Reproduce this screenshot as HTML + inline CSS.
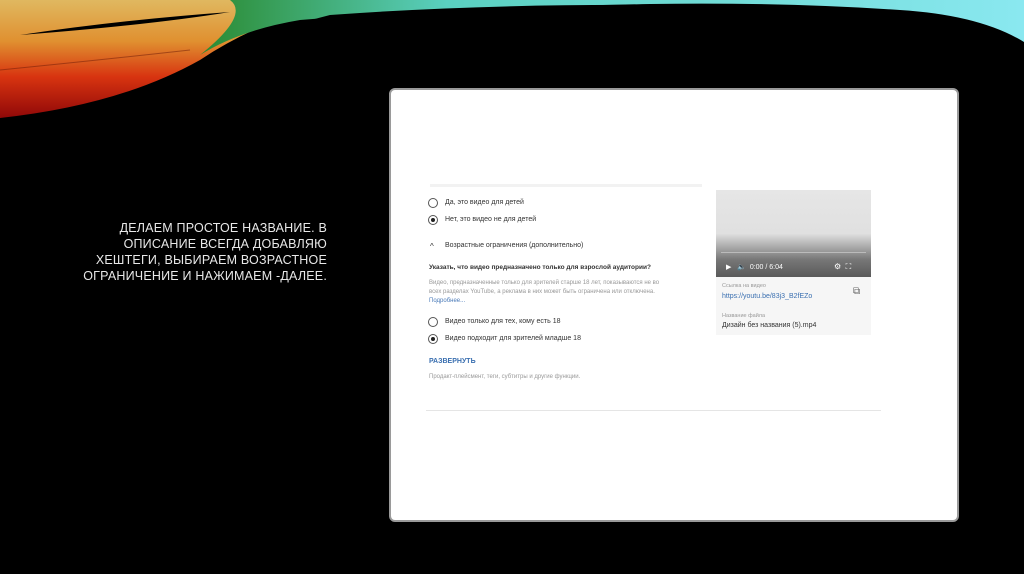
<!DOCTYPE html>
<html><head><meta charset="utf-8"><style>
body{margin:0;width:1024px;height:574px;background:#000;overflow:hidden;position:relative;font-family:"Liberation Sans","DejaVu Sans",sans-serif}
.t{position:absolute;right:697px;top:220px;text-align:right;color:#e8e8e8;font-size:12.5px;line-height:16px;letter-spacing:0.2px}
.card{position:absolute;left:389px;top:88px;width:570px;height:434px;background:#fff;border:2px solid #9a9a9a;border-radius:6px;box-sizing:border-box}
.a{position:absolute;font-size:7px;color:#333;white-space:nowrap}
.r{position:absolute;width:8px;height:8px;border:1px solid #555;border-radius:50%}
.r.on::after{content:"";position:absolute;left:2px;top:2px;width:4px;height:4px;border-radius:50%;background:#222}
</style></head><body>
<svg width="1024" height="130" style="position:absolute;left:0;top:0">
<defs>
<linearGradient id="g1" x1="0" y1="0" x2="0" y2="1"><stop offset="0" stop-color="#e0b860"/><stop offset="0.35" stop-color="#e09030"/><stop offset="0.65" stop-color="#d83410"/><stop offset="1" stop-color="#900808"/></linearGradient>
<linearGradient id="g2" x1="0" y1="0" x2="1" y2="0"><stop offset="0" stop-color="#2a8a30"/><stop offset="0.3" stop-color="#5ad0c0"/><stop offset="1" stop-color="#8ae8f0"/></linearGradient>
</defs>
<path d="M0 0 L340 0 Q260 20 200 60 Q120 105 0 118 Z" fill="url(#g1)"/>
<path d="M20 35 Q120 20 230 12 Q150 25 20 35Z" fill="#000"/>
<path d="M0 70 Q100 60 190 50" stroke="#6a1a08" stroke-width="1" fill="none" opacity="0.5"/>
<path d="M230 0 L1024 0 L1024 42 Q980 15 900 10 Q780 2 650 4 Q450 8 300 20 Q240 30 200 55 Q250 15 230 0Z" fill="url(#g2)"/>
<path d="M330 15 Q480 4 650 5 Q800 4 900 12 Q990 25 1024 48 L1024 130 L0 130 L0 122 Q140 108 230 55 Q270 30 330 15Z" fill="#000"/>
</svg>
<div class="t">ДЕЛАЕМ ПРОСТОЕ НАЗВАНИЕ. В<br>ОПИСАНИЕ ВСЕГДА ДОБАВЛЯЮ<br>ХЕШТЕГИ, ВЫБИРАЕМ ВОЗРАСТНОЕ<br>ОГРАНИЧЕНИЕ И НАЖИМАЕМ -ДАЛЕЕ.</div>
<div class="card"></div>
<div style="position:absolute;left:430px;top:184px;width:272px;height:3px;background:#f2f2f2"></div>
<div class="r" style="left:428px;top:198px"></div><div class="a" style="left:445px;top:199px">Да, это видео для детей</div>
<div class="r on" style="left:428px;top:215px"></div><div class="a" style="left:445px;top:216px">Нет, это видео не для детей</div>
<div class="a" style="left:430px;top:242px;font-size:8px">^</div><div class="a" style="left:445px;top:242px">Возрастные ограничения (дополнительно)</div>
<div class="a" style="left:429px;top:264px;font-size:6.5px;font-weight:bold">Указать, что видео предназначено только для взрослой аудитории?</div>
<div class="a" style="left:429px;top:279px;font-size:6px;color:#999;line-height:9px">Видео, предназначенные только для зрителей старше 18 лет, показываются не во<br>всех разделах YouTube, а реклама в них может быть ограничена или отключена.<br><span style="color:#4a7ab8">Подробнее...</span></div>
<div class="r" style="left:428px;top:317px"></div><div class="a" style="left:445px;top:318px">Видео только для тех, кому есть 18</div>
<div class="r on" style="left:428px;top:334px"></div><div class="a" style="left:445px;top:335px">Видео подходит для зрителей младше 18</div>
<div class="a" style="left:429px;top:358px;font-weight:bold;color:#3a6fb0">РАЗВЕРНУТЬ</div>
<div class="a" style="left:429px;top:374px;font-size:6px;color:#999">Продакт-плейсмент, теги, субтитры и другие функции.</div>
<div style="position:absolute;left:426px;top:410px;width:455px;height:1px;background:#e5e5e5"></div>
<div style="position:absolute;left:716px;top:190px;width:155px;height:87px;background:linear-gradient(#e6e6e6 0,#e0e0e0 50%,#777 80%,#5a5a5a)"></div>
<div style="position:absolute;left:721px;top:252px;width:145px;height:1px;background:#bbb"></div>
<div class="a" style="left:726px;top:263px;color:#fff">▶ &nbsp;&nbsp;🔈&nbsp; 0:00 / 6:04</div>
<div class="a" style="left:834px;top:262px;color:#fff;font-size:8px">⚙ &nbsp;⛶</div>
<div style="position:absolute;left:716px;top:277px;width:155px;height:58px;background:#f6f6f6"></div>
<div class="a" style="left:722px;top:283px;font-size:5.5px;color:#999">Ссылка на видео</div>
<div class="a" style="left:722px;top:293px;color:#3a6fb0">https://youtu.be/83j3_B2fEZo</div>
<div class="a" style="left:853px;top:286px;font-size:10px;color:#666">⧉</div>
<div class="a" style="left:722px;top:313px;font-size:5.5px;color:#999">Название файла</div>
<div class="a" style="left:722px;top:322px">Дизайн без названия (5).mp4</div>
</body></html>
